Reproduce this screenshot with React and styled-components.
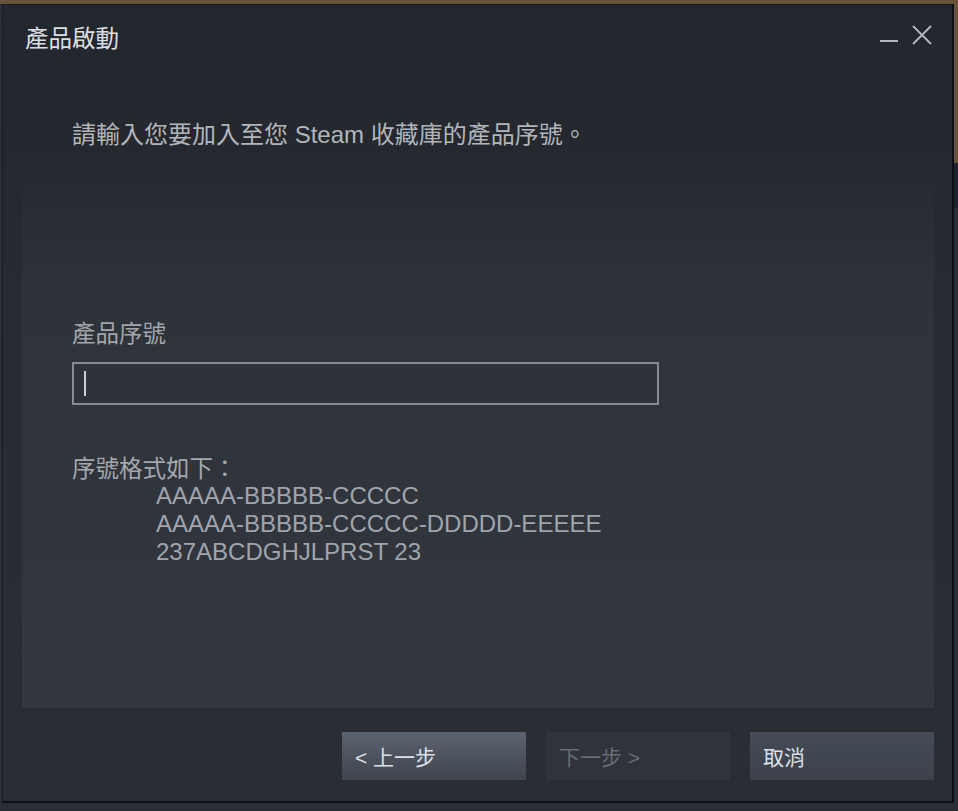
import React from 'react';
import styled, { createGlobalStyle } from 'styled-components';

const GlobalStyle = createGlobalStyle`
  html, body {
    margin: 0;
    padding: 0;
    background: #2b2e34;
  }
  body {
    font-family: "Liberation Sans", "Noto Sans CJK TC", sans-serif;
  }
`;

function App() {
  return (
    <Desktop>
      <GlobalStyle />
      <Window>
        <TitleBar>
          <Title>產品啟動</Title>
          <WindowControls>
            <ControlButton aria-label="minimize">
              <svg width="18" height="6" viewBox="0 0 18 6">
                <rect x="0" y="1" width="18" height="2" fill="#b4b8bc" />
              </svg>
            </ControlButton>
            <ControlButton aria-label="close">
              <svg width="20" height="20" viewBox="0 0 20 20">
                <path d="M1 1 L19 19 M19 1 L1 19" stroke="#b4b8bc" strokeWidth="1.8" fill="none" />
              </svg>
            </ControlButton>
          </WindowControls>
        </TitleBar>
        <Panel>
          <Prompt>請輸入您要加入至您 Steam 收藏庫的產品序號。</Prompt>
          <FieldLabel>產品序號</FieldLabel>
          <KeyInput>
            <Caret />
          </KeyInput>
          <FormatLabel>序號格式如下：</FormatLabel>
          <FormatList>
            <FormatLine>AAAAA-BBBBB-CCCCC</FormatLine>
            <FormatLine>AAAAA-BBBBB-CCCCC-DDDDD-EEEEE</FormatLine>
            <FormatLine>237ABCDGHJLPRST 23</FormatLine>
          </FormatList>
        </Panel>
        <ButtonRow>
          <NavButton variant="primary">&lt; 上一步</NavButton>
          <NavButton variant="disabled" disabled>下一步 &gt;</NavButton>
          <NavButton>取消</NavButton>
        </ButtonRow>
      </Window>
    </Desktop>
  );
}

export default App;

const Desktop = styled.div`
  width: 958px;
  height: 811px;
  box-sizing: border-box;
  padding: 4px 4px 8px 2px;
  background:
    linear-gradient(to bottom, #6a513a 0, #6a513a 4px, transparent 4px),
    linear-gradient(to bottom, #6a513a 0, #6a513a 163px, #1b2130 163px, #1b2130 208px, transparent 208px),
    #2b2e34;
  background-size: 100% 100%, 4px 100%, 100% 100%;
  background-position: 0 0, right top, 0 0;
  background-repeat: no-repeat;
  overflow: hidden;
`;

const Window = styled.div`
  width: 952px;
  height: 799px;
  box-sizing: border-box;
  border: 1px solid #141a26;
  border-right-width: 2px;
  border-bottom-width: 2px;
  border-right-color: #0b0e14;
  border-bottom-color: #0b0e14;
  background: linear-gradient(to bottom, #22262d 0%, #282b31 40%, #2a2d33 100%);
  display: flex;
  flex-direction: column;
`;

const TitleBar = styled.div`
  height: 59px;
  flex: none;
  display: flex;
  align-items: flex-start;
  justify-content: space-between;
  padding: 20px 20px 0 22px;
  box-sizing: border-box;
`;

const Title = styled.div`
  font-size: 23.5px;
  line-height: 28px;
  color: #dcdfe2;
`;

const WindowControls = styled.div`
  display: flex;
  align-items: flex-start;
  gap: 14px;
  padding-top: 0px;
`;

const ControlButton = styled.div`
  display: flex;
  align-items: flex-end;
  height: 20px;
  line-height: 0;
`;

const Panel = styled.div`
  flex: 1;
  margin: 0 18px 0 19px;
  padding: 57px 50px 0 50px;
  background: linear-gradient(to bottom, rgba(44, 48, 55, 0) 0%, rgba(44, 48, 55, 0) 15%, #2e3239 35%, #32363e 100%);
  color: #b0b4b9;
`;

const Prompt = styled.div`
  font-size: 24px;
  line-height: 28px;
  color: #b2b6bb;
`;

const FieldLabel = styled.div`
  margin-top: 171px;
  font-size: 23.5px;
  line-height: 28px;
  color: #a2a6ac;
`;

const KeyInput = styled.div`
  margin-top: 14px;
  width: 587px;
  height: 43px;
  box-sizing: border-box;
  border: 2px solid #858a94;
  background: #2e3239;
  display: flex;
  align-items: center;
  padding-left: 10px;
`;

const Caret = styled.span`
  width: 2px;
  height: 25px;
  background: #c8cedc;
`;

const FormatLabel = styled.div`
  margin-top: 52px;
  font-size: 23.5px;
  line-height: 25px;
  color: #a4a8ae;
`;

const FormatList = styled.div`
  padding-left: 84px;
`;

const FormatLine = styled.div`
  font-size: 24px;
  line-height: 28px;
  color: #a0a5ab;
`;

const ButtonRow = styled.div`
  flex: none;
  display: flex;
  justify-content: flex-end;
  gap: 20px;
  padding: 24px 18px 21px 0;
`;

const NavButton = styled.button`
  width: 184px;
  height: 48px;
  border: none;
  border-radius: 0;
  padding: 0 0 0 13px;
  text-align: left;
  font-family: "Liberation Sans", "Noto Sans CJK TC", sans-serif;
  font-size: 21px;
  color: ${(p) => (p.variant === 'disabled' ? '#676c74' : '#dde0e4')};
  background: ${(p) =>
    p.variant === 'primary'
      ? 'linear-gradient(to bottom, #5c6370 0%, #4a505b 60%, #40454f 100%)'
      : p.variant === 'disabled'
      ? '#2f333a'
      : 'linear-gradient(to bottom, #454b57 0%, #3c414b 100%)'};
  cursor: ${(p) => (p.variant === 'disabled' ? 'default' : 'pointer')};
`;
